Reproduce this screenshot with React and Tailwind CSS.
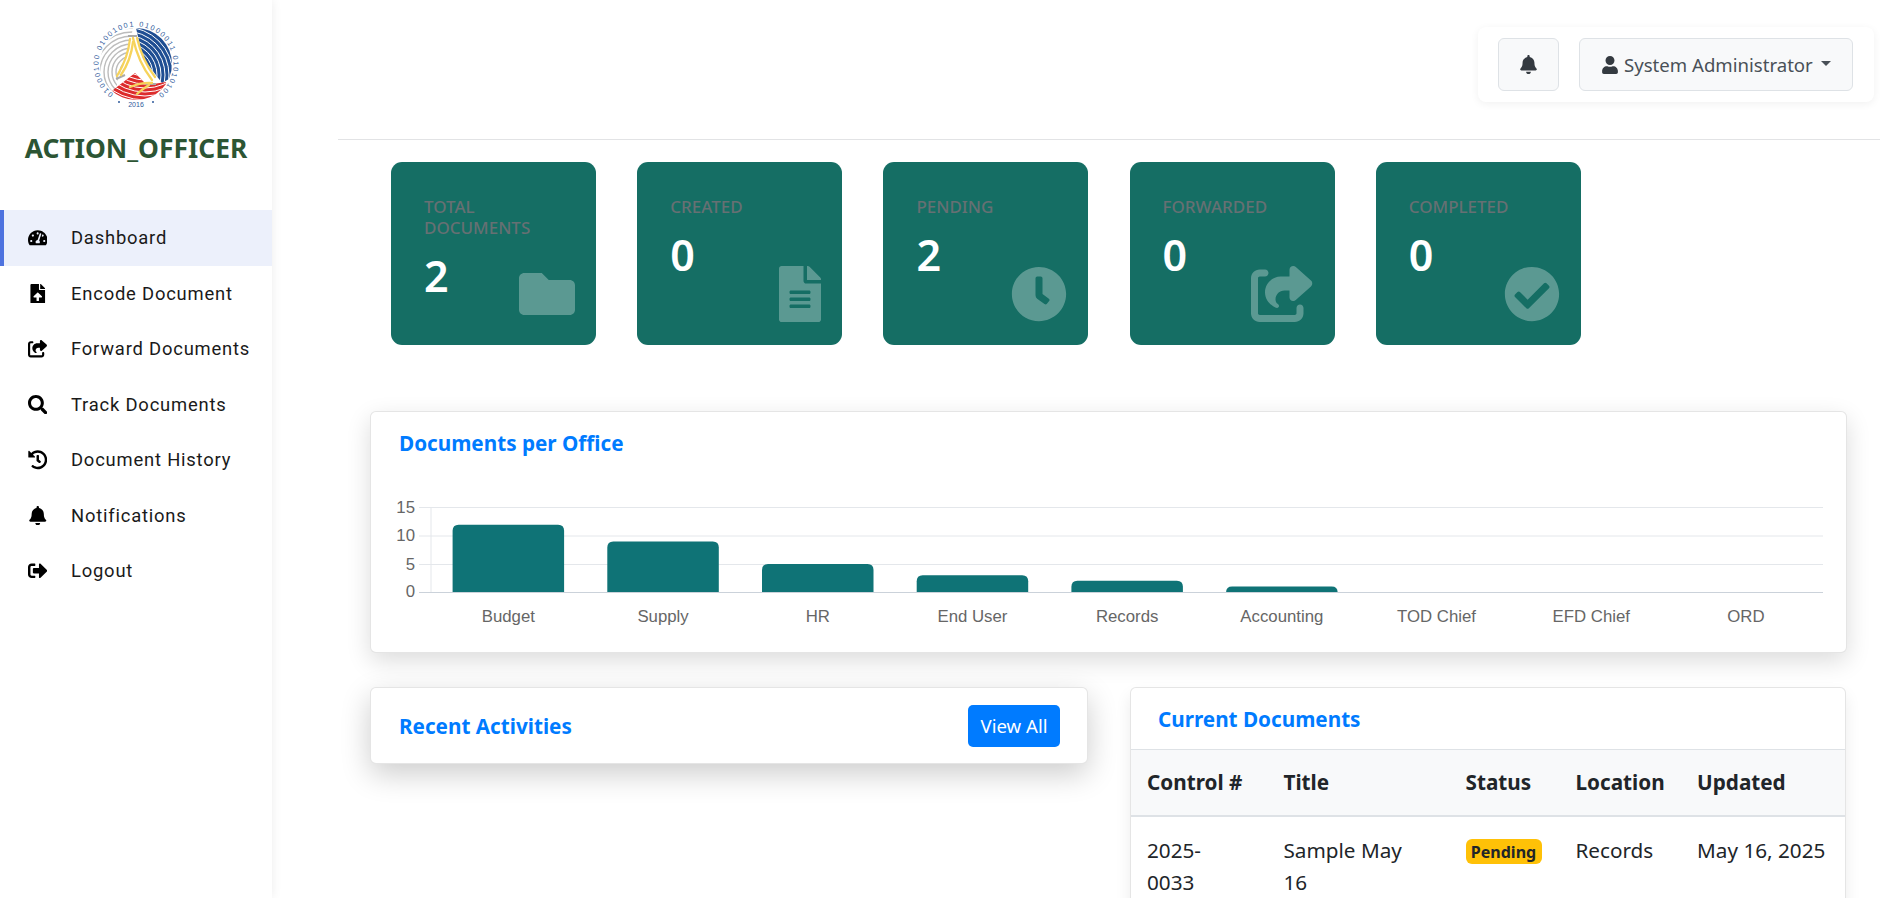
import {
  FaBell,
  FaCheckCircle,
  FaClock,
  FaFileAlt,
  FaFileUpload,
  FaFolder,
  FaHistory,
  FaSearch,
  FaSignOutAlt,
  FaTachometerAlt,
  FaUser,
} from "react-icons/fa";
import { FaShareFromSquare } from "react-icons/fa6";

const navItems = [
  { label: "Dashboard", icon: FaTachometerAlt, active: true },
  { label: "Encode Document", icon: FaFileUpload },
  { label: "Forward Documents", icon: FaShareFromSquare },
  { label: "Track Documents", icon: FaSearch },
  { label: "Document History", icon: FaHistory },
  { label: "Notifications", icon: FaBell },
  { label: "Logout", icon: FaSignOutAlt },
];

const stats = [
  { label: "TOTAL DOCUMENTS", value: 2, icon: FaFolder, iconClass: "w-[56px]" },
  { label: "CREATED", value: 0, icon: FaFileAlt, iconClass: "w-[42px]" },
  { label: "PENDING", value: 2, icon: FaClock, iconClass: "w-[56px]" },
  { label: "FORWARDED", value: 0, icon: FaShareFromSquare, iconClass: "w-[63px]" },
  { label: "COMPLETED", value: 0, icon: FaCheckCircle, iconClass: "w-[56px]" },
];

const offices = [
  ["Budget", 12],
  ["Supply", 9],
  ["HR", 5],
  ["End User", 3],
  ["Records", 2],
  ["Accounting", 1],
  ["TOD Chief", 0],
  ["EFD Chief", 0],
  ["ORD", 0],
];

function Logo() {
  const rings = [4, 8, 12, 16, 20, 24, 28, 32, 36, 40, 44, 48, 52, 56, 60, 64];
  return (
    <svg width="100" height="100" viewBox="86 14 100 100" className="block">
      <defs>
        <clipPath id="disc">
          <circle cx="136" cy="64" r="36" />
        </clipPath>
        <clipPath id="leftSide">
          <path d="M134 20 H90 V110 H112 L118 80 L131 40 Z" />
        </clipPath>
        <clipPath id="blueSide">
          <path d="M136 20 V28 L143 58 L162 83 L185 70 V20 Z" />
        </clipPath>
        <clipPath id="redSide">
          <path d="M108 95 L113 90 L135 73 L147 85 L166 82 L170 110 H100 Z" />
        </clipPath>
        <path id="binaryRing" d="M113.4 94 A37.5 37.5 0 1 1 158.6 94" />
      </defs>
      <g clipPath="url(#disc)">
        <g clipPath="url(#leftSide)" fill="none" stroke="#bcbcbc" strokeWidth="1.4">
          {rings.map((r) => (
            <circle key={r} cx="132" cy="72" r={r} />
          ))}
        </g>
        <g clipPath="url(#blueSide)">
          <rect x="130" y="20" width="60" height="80" fill="#1f4e93" />
          <g fill="none" stroke="#ffffff" strokeWidth="1">
            {rings.map((r) => (
              <circle key={r} cx="125" cy="75" r={r} />
            ))}
          </g>
        </g>
        <g clipPath="url(#redSide)">
          <rect x="96" y="70" width="80" height="40" fill="#dd2c2c" />
          <g fill="none" stroke="#ffffff" strokeWidth="1">
            {rings.map((r) => (
              <circle key={r} cx="145" cy="40" r={r} />
            ))}
          </g>
        </g>
        <g fill="none" stroke="#a9a9a9" strokeWidth="2">
          <path d="M128 36 L137 36" />
          <path d="M116 79 L125 75" />
          <path d="M146 84 L156 84" />
        </g>
        <g fill="none" stroke="#f6d35b" strokeWidth="2.3" strokeLinecap="round">
          <path d="M130 39 Q128 58 117 76" />
          <path d="M133 42 Q131 60 121 75" />
          <path d="M133 38 Q138 62 152 80" />
          <path d="M137 38 Q142 60 155 77" />
          <path d="M130 87 Q142 82 152 83" />
          <path d="M137 94 Q144 88 149 85" />
        </g>
      </g>
      <text fontFamily="'Liberation Sans', sans-serif" fontSize="7.2" fill="#2f5a9b">
        <textPath href="#binaryRing" textLength="187" startOffset="0">
          01000100 01001001 01000011 01010100
        </textPath>
      </text>
      <text x="136" y="107" textAnchor="middle" fontFamily="'Liberation Sans', sans-serif" fontSize="7" fill="#2f5a9b">
        2016
      </text>
      <circle cx="119" cy="102" r="1" fill="#2f5a9b" />
      <circle cx="153" cy="102" r="1" fill="#2f5a9b" />
    </svg>
  );
}

function Sidebar() {
  return (
    <aside className="w-[272px] shrink-0 bg-white shadow-[0_0_10px_rgba(0,0,0,0.08)] z-10">
      <div className="h-[114px] pt-[14px] flex justify-center">
        <Logo />
      </div>
      <div className="h-[96px] pt-[14px] text-center font-bold text-[26.4px] leading-[40px] text-[#2c5534]">
        ACTION_OFFICER
      </div>
      <nav className="font-['Roboto',sans-serif] text-[18.4px] tracking-[0.8px] text-[#1a1a1a]">
        {navItems.map((item) => {
          const Icon = item.icon;
          return (
            <div
              key={item.label}
              className={`h-[55.55px] flex items-center ${
                item.active ? "bg-[#ecf0fb] border-l-4 border-[#4e73df]" : "border-l-4 border-transparent"
              }`}
            >
              <span className="w-[67px] flex justify-center text-[19.5px] text-black">
                <Icon />
              </span>
              {item.label}
            </div>
          );
        })}
      </nav>
    </aside>
  );
}

function TopBar() {
  return (
    <header className="w-[1542px] h-[140px] pt-[27px] pr-[6px] flex justify-end border-b border-[#e2e3e5]">
      <div className="w-[396px] h-[75px] flex items-center gap-[20px] pl-[20px] bg-white rounded-lg shadow-[0_2px_8px_rgba(0,0,0,0.06)]">
        <button className="w-[61px] h-[53px] flex items-center justify-center bg-[#f8f9fa] border border-[#dee2e6] rounded-md text-[#343a40] text-[19px]">
          <FaBell />
        </button>
        <button className="w-[274px] h-[53px] pl-[21px] flex items-center bg-[#f8f9fa] border border-[#dee2e6] rounded-md text-[#495057] text-[18.6px]">
          <FaUser className="text-[#343a40] text-[18px] mr-[5px]" />
          System Administrator
          <span className="ml-[8px] mb-[3px] border-x-[5px] border-t-[5px] border-x-transparent border-t-[#495057]" />
        </button>
      </div>
    </header>
  );
}

function StatCard({ stat }) {
  const Icon = stat.icon;
  return (
    <div className="relative w-[205px] h-[183px] pt-[34px] pl-[33px] pr-[40px] bg-[#156e64] rounded-[11px]">
      <div className="text-[17px] leading-[21px] font-medium text-[#667073]">{stat.label}</div>
      <div className="mt-[11px] text-[43px] leading-[54px] font-semibold text-white">{stat.value}</div>
      <div className="absolute right-[21px] top-[104px] h-[56px] flex items-center text-white/30">
        <Icon className={`${stat.iconClass} h-[56px]`} />
      </div>
    </div>
  );
}

function OfficeChart() {
  const unit = 5.6;
  const left = 431;
  const step = 154.7;
  return (
    <svg viewBox="371 480 1475 172" className="block w-[1475px] h-[172px]">
      {[
        [15, 507.5],
        [10, 536],
        [5, 564.5],
      ].map(([tick, y]) => (
        <g key={tick}>
          <line x1="419" x2="1823" y1={y} y2={y} stroke="#e4e7eb" strokeWidth="1" />
          <text x="415" y={y + 5} textAnchor="end" fontSize="16.8" fill="#666" fontFamily="'Liberation Sans', sans-serif">
            {tick}
          </text>
        </g>
      ))}
      <line x1="431" x2="431" y1="507" y2="592" stroke="#e4e7eb" strokeWidth="1" />
      {offices.map(([name, count], i) => {
        const x = left + step * i + 21.6;
        const h = count * unit;
        return (
          <g key={name}>
            {count > 0 && (
              <path
                d={`M${x} 592 V${592 - h + Math.min(6, h)} Q${x} ${592 - h} ${x + 6} ${592 - h} H${x + 105.5} Q${x + 111.5} ${592 - h} ${x + 111.5} ${592 - h + Math.min(6, h)} V592 Z`}
                fill="#0f7376"
              />
            )}
            <text x={x + 55.75} y="622" textAnchor="middle" fontSize="16.8" fill="#666" fontFamily="'Liberation Sans', sans-serif">
              {name}
            </text>
          </g>
        );
      })}
      <line x1="419" x2="1823" y1="592.5" y2="592.5" stroke="#cbd2da" strokeWidth="1" />
      <text x="415" y="597" textAnchor="end" fontSize="16.8" fill="#666" fontFamily="'Liberation Sans', sans-serif">
        0
      </text>
    </svg>
  );
}

function CurrentDocuments() {
  return (
    <div className="w-[716px] bg-white border border-black/10 rounded-md shadow-[0_8px_16px_rgba(0,0,0,0.08)] overflow-hidden">
      <div className="h-[62px] pl-[27px] pt-[2px] flex items-center font-bold text-[20.7px] text-[#007bff] border-b border-[#dee2e6]">
        Current Documents
      </div>
      <table className="w-full table-fixed text-[20.7px] text-[#212529]">
        <colgroup>
          <col className="w-[136.5px]" />
          <col className="w-[182px]" />
          <col className="w-[110px]" />
          <col className="w-[121.6px]" />
          <col />
        </colgroup>
        <thead>
          <tr className="h-[66px] bg-[#f8f9fa] border-b-2 border-[#dee2e6] text-left">
            <th className="px-[16px] font-bold">Control #</th>
            <th className="px-[16px] font-bold">Title</th>
            <th className="px-[16px] font-bold">Status</th>
            <th className="px-[16px] font-bold">Location</th>
            <th className="px-[16px] font-bold">Updated</th>
          </tr>
        </thead>
        <tbody className="leading-[32px]">
          <tr className="align-top">
            <td className="px-[16px] pt-[17px] pb-[16px]">2025-<br />0033</td>
            <td className="px-[16px] pt-[17px] pb-[16px]">Sample May<br />16</td>
            <td className="px-[16px] pt-[17px] pb-[16px]">
              <span className="mt-[5px] w-[76px] h-[25px] flex items-center justify-center rounded-[6px] bg-[#ffc107] text-[16px] font-bold">
                Pending
              </span>
            </td>
            <td className="px-[16px] pt-[17px] pb-[16px]">Records</td>
            <td className="px-[16px] pt-[17px] pb-[16px] whitespace-nowrap">May 16, 2025</td>
          </tr>
        </tbody>
      </table>
    </div>
  );
}

export default function App() {
  return (
    <div className="h-screen flex overflow-hidden bg-white font-['Noto_Sans',sans-serif]">
      <Sidebar />
      <main className="flex-1 pl-[66px]">
        <TopBar />
        <div className="mt-[22px] ml-[53px] flex gap-[41.2px]">
          {stats.map((stat) => (
            <StatCard key={stat.label} stat={stat} />
          ))}
        </div>
        <section className="mt-[66px] ml-[32px] w-[1477px] h-[242px] bg-white border border-black/10 rounded-md shadow-[0_8px_24px_rgba(0,0,0,0.14)]">
          <h2 className="h-[68px] pt-[15px] pl-[28px] font-bold text-[20.7px] leading-[32px] text-[#007bff]">
            Documents per Office
          </h2>
          <OfficeChart />
        </section>
        <div className="mt-[34px] ml-[32px] flex items-start gap-[42px]">
          <section className="w-[718px] h-[77px] pl-[28px] pr-[27px] flex items-center justify-between bg-white border border-black/10 rounded-md shadow-[0_10px_30px_rgba(0,0,0,0.2)]">
            <h2 className="pt-[2px] font-bold text-[20.7px] text-[#007bff]">Recent Activities</h2>
            <button className="w-[92px] h-[42px] bg-[#007bff] rounded-[5px] text-white text-[18.6px]">View All</button>
          </section>
          <CurrentDocuments />
        </div>
      </main>
    </div>
  );
}
